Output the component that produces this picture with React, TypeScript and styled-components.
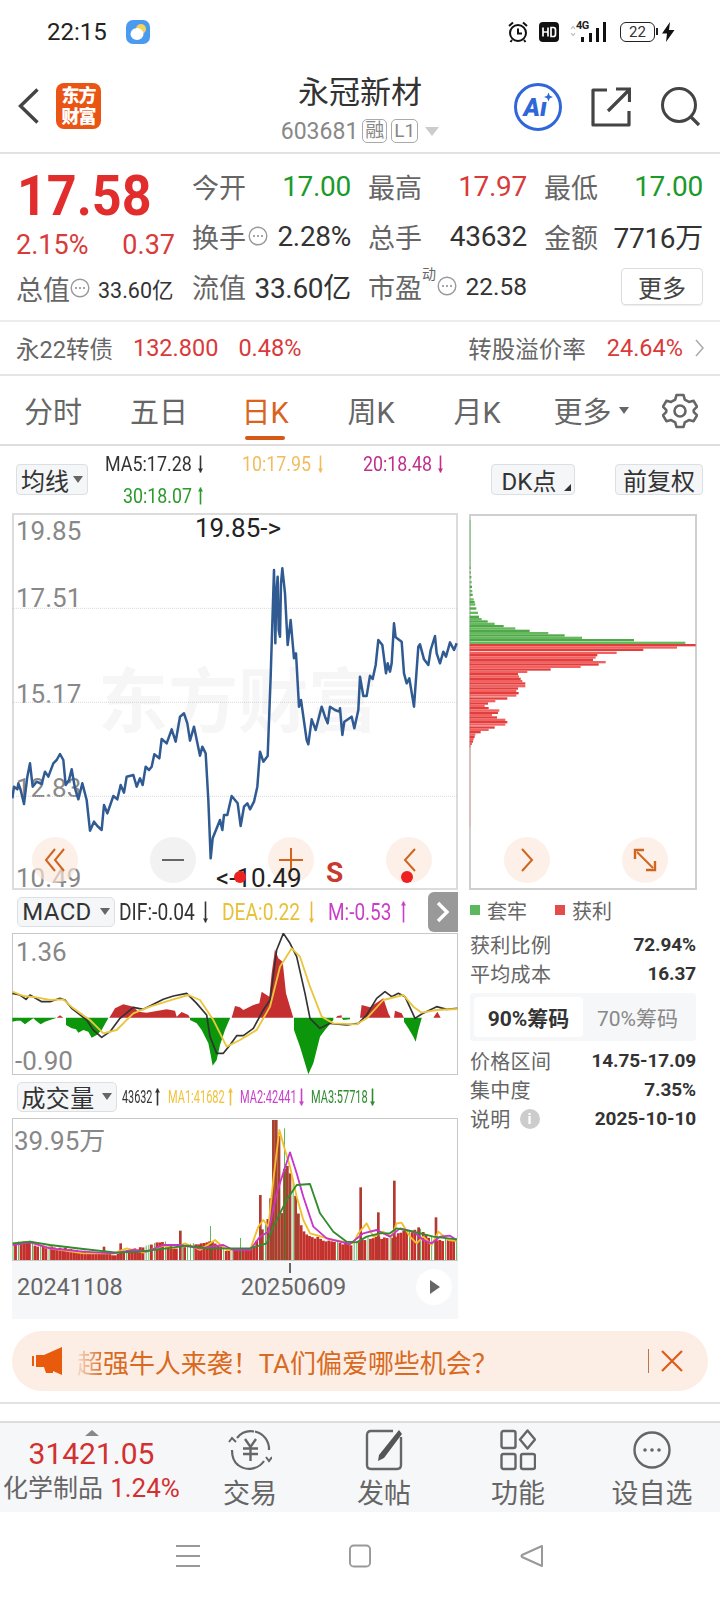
import React from "react";
import styled, { createGlobalStyle } from "styled-components";

const Global = createGlobalStyle`
  html, body { margin: 0; padding: 0; background: #fff; }
  body { font-family: Roboto, "Noto Sans CJK SC", sans-serif; overflow: hidden; }
  * { box-sizing: border-box; }
`;

const Page = styled.div`
  width: 720px; height: 1600px; background: #fff; display: flex; flex-direction: column; overflow: hidden;
`;

/* ---------- status bar ---------- */
const StatusBar = styled.div`
  height: 62px; display: flex; align-items: center; padding: 2px 45px 0 47px;
`;
const Clock = styled.span`font-size: 24px; color: #222; width: 79px;`;
const StatusRight = styled.div`margin-left: auto; display: flex; align-items: center; gap: 10px;`;
const FourG = styled.span`
  position: relative; width: 38px; height: 20px; display: block;
  font-size: 11px; font-weight: 700; color: #222;
`;
const FourGText = styled.span`position: absolute; left: 7px; top: -3px; letter-spacing: -0.5px;`;
const Battery = styled.span`
  width: 35px; height: 20px; border: 1.5px solid #222; border-radius: 6px; font-size: 15px; color: #333;
  display: flex; align-items: center; justify-content: center; margin: 0 -4px 0 3px; position: relative;
  &::after { content: ""; position: absolute; right: -4px; top: 5px; width: 2px; height: 7px; background: #222; }
`;

/* ---------- header ---------- */
const Header = styled.div`
  height: 92px; display: grid; grid-template-columns: 1fr auto 1fr; border-bottom: 2px solid #e2e2e2;
`;
const HeaderLeft = styled.div`display: flex; align-items: center; gap: 17px; padding: 0 0 2px 18px; `;
const HeaderRight = styled.div`display: flex; align-items: center; justify-content: flex-end; gap: 29px; padding: 0 19px 0 0;`;
const Logo = styled.div`
  width: 45px; height: 46px; border-radius: 8px; background: #ea5514; color: #fff;
  font-weight: 900; font-size: 18px; line-height: 21px;
  display: flex; flex-direction: column; align-items: center; justify-content: center; text-align: center; letter-spacing: -1px;
`;
const TitleBox = styled.div`
  display: flex; flex-direction: column; align-items: center; padding-top: 13px;
`;
const Title = styled.div`font-size: 31px; line-height: 36px; color: #333;`;
const Sub = styled.div`display: flex; align-items: center; height: 40px; color: #888; font-size: 23px; gap: 4px;`;
const SubBadge = styled.span`
  border: 1px solid #aaa; border-radius: 5px; height: 24px; font-size: 19px; line-height: 22px; padding: 0 2px; color: #888;
  display: flex; align-items: center;
`;
const SubTriangle = styled.span`
  width: 0; height: 0; border-left: 7px solid transparent; border-right: 7px solid transparent; border-top: 9px solid #ccc; margin-left: 3px;
`;

/* ---------- quote ---------- */
const Quote = styled.div`
  height: 168px; padding: 7px 0 0 16px; display: flex; border-bottom: 2px solid #ececec;
`;
const QuoteLeft = styled.div`width: 176px; display: flex; flex-direction: column;`;
const BigPrice = styled.div`
  height: 66px; width: 160px; font-size: 56px; line-height: 70px; font-weight: 700; color: #e22d2d;
  transform: scaleX(0.93); transform-origin: left center; padding-left: 1px;
`;
const ChangeRow = styled.div`
  height: 36px; width: 159px; display: flex; justify-content: space-between; align-items: center;
  font-size: 27px; color: #d93a3a;
`;
const TotalRow = styled.div`
  height: 50px; display: flex; align-items: center; color: #666; font-size: 27px;
`;
const SmallValue = styled.span`font-size: 21.5px; color: #333; margin-left: 8px;`;
const QuoteGrid = styled.div`
  display: grid; grid-template-columns: repeat(3, 159px); column-gap: 17px; grid-auto-rows: 50px;
`;
const Cell = styled.div`display: flex; align-items: center; justify-content: space-between; font-size: 27px; color: #666;`;
const CellLeft = styled.span`display: inline-flex; align-items: center; gap: 2px; position: relative;`;
const Val = styled.span<{ $c?: string; $s?: number }>`
  color: ${(p) => p.$c || "#333"}; font-size: ${(p) => p.$s || 28}px; letter-spacing: ${(p) => (p.$s ? "0" : "-0.3px")};
`;
const Sup = styled.span`position: absolute; left: 54px; top: -4px; font-size: 14px; color: #666;`;
const MoreBtn = styled.div`
  width: 82px; height: 37px; border: 1px solid #ddd; border-radius: 4px; font-size: 24px; color: #444;
  display: flex; align-items: center; justify-content: center; box-shadow: 0 1px 1px #eee;
`;

/* ---------- bond ---------- */
const Bond = styled.div`
  height: 54px; display: flex; align-items: center; padding: 0 16px 0 16px; font-size: 23.5px; color: #666; border-bottom: 2px solid #e5e5e5;
`;
const BondNum = styled.span<{ $ml: number }>`color: #d93a3a; margin-left: ${(p) => p.$ml}px;`;
const BondRight = styled.span`margin-left: auto; display: flex; align-items: center;`;
const BondChevron = styled.span`display: inline-flex; margin-left: 12px;`;

/* ---------- tabs ---------- */
const Tabs = styled.div`height: 70px; display: flex; border-bottom: 2px solid #dedede; position: relative;`;
const Tab = styled.div<{ $on?: boolean; $w?: number }>`
  width: ${(p) => p.$w || 106}px; height: 70px; display: flex; align-items: center; justify-content: center; padding-bottom: 2px;
  font-size: 29px; color: ${(p) => (p.$on ? "#d9641f" : "#666")}; position: relative; gap: 7px;
  ${(p) =>
    p.$on
      ? `&::after { content: ""; position: absolute; left: 33px; bottom: 6px; width: 40px; height: 4px; border-radius: 2px; background: #d65a17; }`
      : ""}
`;
const TabCaret = styled.span`
  width: 0; height: 0; border-left: 5px solid transparent; border-right: 5px solid transparent; border-top: 7px solid #666;
`;
const GearBox = styled.div`margin-left: 10px; display: flex; align-items: center; padding-top: 1px;`;

/* ---------- MA row ---------- */
const MaRow = styled.div`height: 67px; display: flex; padding: 0 16px;`;
const ToolBtn = styled.div<{ $w: number; $ml?: number; $pr?: number }>`
  width: ${(p) => p.$w}px; height: 31px; margin: 18px 0 0 ${(p) => p.$ml || 0}px; background: #f5f6f8; border: 1px solid #dcdfe4; border-radius: 4px;
  padding-right: ${(p) => p.$pr || 0}px;
  display: flex; align-items: center; justify-content: center; gap: 4px; font-size: 24px; color: #333; position: relative; flex: none;
`;
const BtnCaret = styled.span`
  width: 0; height: 0; border-left: 5px solid transparent; border-right: 5px solid transparent; border-top: 7px solid #666;
`;
const CornerMark = styled.span`
  position: absolute; right: 3px; bottom: 3px; width: 0; height: 0; border-left: 7px solid transparent; border-bottom: 7px solid #333;
`;
const MaCol = styled.div<{ $w: number; $ml: number }>`
  width: ${(p) => p.$w}px; margin-left: ${(p) => p.$ml}px; display: flex; flex-direction: column; align-items: flex-end; flex: none; font-size: 20px; padding-top: 2px;
`;
const MaLine = styled.div`height: 32px; display: flex; align-items: center; gap: 6px;`;
const Cond = styled.span<{ $w: number; $sx: number; $c: string; $s?: number }>`
  display: inline-block; width: ${(p) => p.$w}px; white-space: nowrap; color: ${(p) => p.$c};
  font-size: ${(p) => p.$s || 20}px; transform: scaleX(${(p) => p.$sx}); transform-origin: left center; flex: none;
`;

/* ---------- content ---------- */
const Content = styled.div`display: flex; padding-left: 12px; height: 806px;`;
const LeftCol = styled.div`width: 446px; display: flex; flex-direction: column; flex: none;`;
const RightCol = styled.div`width: 228px; margin-left: 11px; display: flex; flex-direction: column; flex: none; padding-top: 1px;`;
const ChartBox = styled.div<{ $h: number; $bw: number; $bc: string }>`
  position: relative; width: 100%; height: ${(p) => p.$h}px; flex: none;
  outline: ${(p) => p.$bw}px solid ${(p) => p.$bc}; outline-offset: -${(p) => p.$bw}px;
`;
const Layer = styled.svg`position: absolute; left: 0; top: 0; width: 100%; height: 100%; display: block;`;
const AxisLabel = styled.span<{ $x: number; $y: number; $c?: string; $s?: number }>`
  position: absolute; left: ${(p) => p.$x}px; top: ${(p) => p.$y}px; transform: translateY(-50%); white-space: nowrap;
  font-size: ${(p) => p.$s || 26}px; color: ${(p) => p.$c || "#888"}; line-height: 1;
`;
const Watermark = styled.span`
  position: absolute; left: 86px; top: 150px; font-size: 70px; font-weight: 700; color: #f6f6f6; letter-spacing: 0; white-space: nowrap; line-height: 80px;
`;
const SBadge = styled.span`
  position: absolute; left: 314px; top: 345px; font-size: 28px; font-weight: 700; color: #c93a2e; line-height: 30px;
`;
const RedDot = styled.span<{ $x: number }>`
  position: absolute; left: ${(p) => p.$x}px; top: 358px; width: 12px; height: 12px; border-radius: 50%; background: #ee2020;
`;
const RoundBtn = styled.div<{ $x: number; $y: number; $gray?: boolean }>`
  position: absolute; left: ${(p) => p.$x}px; top: ${(p) => p.$y}px; width: 46px; height: 46px; border-radius: 50%;
  background: ${(p) => (p.$gray ? "rgba(238,238,238,.75)" : "rgba(252,232,219,.65)")};
  display: flex; align-items: center; justify-content: center;
`;
const IndicatorRow = styled.div`
  height: 43px; display: flex; align-items: center; padding-left: 5px; position: relative; flex: none;
`;
const IndBtn = styled.div<{ $w: number; $s?: number }>`
  width: ${(p) => p.$w}px; height: 30px; background: #f5f6f8; border: 1px solid #dcdfe4; border-radius: 5px; flex: none;
  display: flex; align-items: center; justify-content: center; gap: 8px; font-size: ${(p) => p.$s || 24}px; color: #333; letter-spacing: 0.3px;
`;
const MoreTab = styled.div`
  position: absolute; right: 0; top: 2px; width: 30px; height: 40px; background: #999; border-radius: 6px 0 0 6px;
  display: flex; align-items: center; justify-content: center;
`;
const ArrowWrap = styled.span<{ $ml: number; $mr: number }>`
  display: inline-flex; margin: 0 ${(p) => p.$mr}px 0 ${(p) => p.$ml}px; flex: none;
`;
const DateStrip = styled.div`
  height: 58px; background: #f6f7f9; position: relative; display: flex; align-items: center; padding: 0 0 6px 5px; font-size: 23.5px; color: #666; flex: none;
`;
const DateText = styled.span<{ $ml?: number }>`margin-left: ${(p) => p.$ml || 0}px;`;
const Tick = styled.span`position: absolute; left: 277px; top: 2px; width: 2px; height: 10px; background: #666;`;
const PlayBtn = styled.div`
  position: absolute; right: 6px; top: 8px; width: 36px; height: 36px; border-radius: 50%; background: #fff;
  display: flex; align-items: center; justify-content: center; padding-left: 2px;
`;
const PlayTri = styled.span`
  width: 0; height: 0; border-top: 7.5px solid transparent; border-bottom: 7.5px solid transparent; border-left: 10px solid #666;
`;

/* ---------- right info ---------- */
const Legend = styled.div`height: 40px; display: flex; align-items: center; font-size: 20px; color: #666; padding-left: 1px; flex: none; `;
const Swatch = styled.span<{ $c: string; $ml?: number }>`
  width: 10px; height: 10px; background: ${(p) => p.$c}; margin: 0 7px 0 ${(p) => p.$ml || 0}px; flex: none;
`;
const InfoRow = styled.div`
  height: 29px; display: flex; align-items: center; justify-content: space-between; font-size: 20px; color: #666; flex: none; padding: 0 1px;
`;
const InfoKey = styled.span`display: inline-flex; align-items: center; gap: 9px; letter-spacing: 0.3px;`;
const InfoVal = styled.span`font-weight: 700; color: #333; font-size: 19px; letter-spacing: -0.1px;`;
const InfoDot = styled.span`
  width: 20px; height: 20px; border-radius: 50%; background: #ccc; color: #fff; font-size: 15px; font-weight: 700; display: flex; align-items: center; justify-content: center;
`;
const Seg = styled.div`
  height: 48px; margin: 5px 1px; border-radius: 4px; background: #f6f7f9; padding: 4px; display: grid; grid-template-columns: 109px 1fr; flex: none;
`;
const SegItem = styled.div<{ $on?: boolean }>`
  display: flex; align-items: center; justify-content: center; border-radius: 4px; font-size: 21px;
  background: ${(p) => (p.$on ? "#fff" : "transparent")}; color: ${(p) => (p.$on ? "#333" : "#888")}; font-weight: ${(p) => (p.$on ? 700 : 400)};
`;

/* ---------- banner & nav ---------- */
const Banner = styled.div`
  height: 60px; margin: 12px 12px 11px; border-radius: 30px; background: #fdeee5; display: flex; align-items: center; padding: 0 25px 0 20px; font-size: 26px; color: #d86a22; flex: none;
`;
const BannerText = styled.span`margin-left: 14px; white-space: nowrap; letter-spacing: -0.05px;`;
const Faded = styled.span`
  background: linear-gradient(90deg, #f8dcc9, #d86a22); -webkit-background-clip: text; background-clip: text; color: transparent;
`;
const BannerClose = styled.span`margin-left: auto; display: flex; align-items: center; gap: 12px;`;
const BannerSep = styled.span`width: 1.5px; height: 24px; background: #b9764b;`;
const Rule = styled.div`height: 2px; background: #e2e2e2; flex: none; margin-bottom: 17px;`;
const BottomNav = styled.div`
  height: 91px; background: #f6f7f9; border-top: 2px solid #dcdcdc; display: flex; flex: none;
`;
const Index = styled.div`
  width: 183px; display: flex; flex-direction: column; align-items: center; position: relative; padding-top: 7px; flex: none;
`;
const IndexCaret = styled.span`
  width: 0; height: 0; border-left: 7px solid transparent; border-right: 7px solid transparent; border-bottom: 6px solid #888;
`;
const IndexNum = styled.div`font-size: 30px; line-height: 34px; color: #d33030; margin-top: 1px;`;
const IndexSub = styled.div`font-size: 25px; line-height: 30px; color: #666; white-space: nowrap; margin-top: 2px;`;
const IndexPct = styled.span`color: #d33030; margin-left: 7px; font-size: 26px;`;
const NavItem = styled.div`
  width: 134px; display: flex; flex-direction: column; align-items: center; padding-top: 4px; flex: none;
`;
const NavIcon = styled.div`height: 46px; display: flex; align-items: center; justify-content: center;`;
const NavLabel = styled.div`font-size: 27px; line-height: 34px; color: #666; margin-top: 4px;`;
const SystemBar = styled.div`
  flex: 1; display: grid; grid-template-columns: 176px 24px 149px 22px 149px 24px; align-items: center;
`;
const SysItem = styled.div<{ $col: number }>`grid-column: ${(p) => p.$col}; display: flex; justify-content: center;`;

/* ---------- chart data (coordinates of a 3x drawing) ---------- */
const PRICE =
  "37,865 42,830 52,838 55,820 62,840 72,882 82,800 90,760 98,830 110,815 125,822 135,785 145,800 160,760 170,750 180,732 190,750 197,825 207,810 215,778 225,835 235,868 247,820 260,870 270,962 282,935 292,948 305,960 312,885 322,910 340,858 352,868 362,825 372,848 380,800 400,795 410,830 420,805 428,825 437,770 447,780 455,770 463,733 478,745 485,687 500,700 515,658 527,695 540,620 552,610 562,640 570,692 582,650 600,737 607,710 617,730 625,870 632,1045 638,985 660,930 667,960 672,915 682,915 695,858 713,880 722,948 732,890 742,880 750,898 762,875 772,830 780,725 790,755 803,738 812,500 822,180 826,400 829,250 833,200 836,360 840,380 843,220 847,175 855,250 863,405 872,330 882,445 888,430 897,590 903,570 920,690 925,703 935,628 947,660 965,590 975,620 983,640 990,590 1005,600 1018,605 1020,595 1027,675 1033,635 1055,620 1063,655 1075,600 1080,500 1090,558 1100,558 1110,497 1118,507 1127,465 1135,390 1147,405 1158,490 1163,460 1170,485 1175,460 1182,340 1187,382 1205,395 1212,490 1220,520 1228,505 1242,590 1255,410 1260,403 1272,448 1285,465 1292,420 1305,378 1310,430 1320,460 1330,425 1338,440 1350,397 1362,420 1370,400";

const GREEN_BARS: [number, number][] = [
  [200, 33], [214, 34], [228, 35], [243, 36], [257, 37], [270, 38], [281, 39], [295, 42], [303, 45], [310, 47], [322, 50], [335, 55], [347, 58],
  [354, 66], [361, 84], [368, 105], [375, 132], [382, 167], [389, 210], [396, 266], [403, 315], [410, 367], [417, 523], [425, 677],
];
const RED_BARS: [number, number][] = [
  [432, 708], [439, 652], [446, 551], [455, 471], [462, 413], [469, 408], [476, 400], [483, 438], [490, 417], [497, 363], [505, 273], [512, 203],
  [519, 175], [526, 178], [533, 183], [540, 188], [547, 197], [555, 197], [562, 175], [569, 170], [576, 177], [583, 170], [592, 143], [600, 107],
  [607, 85], [614, 75], [621, 87], [628, 119], [635, 115], [642, 97], [649, 112], [656, 137], [663, 143], [670, 137], [679, 105], [686, 87],
  [693, 63], [700, 47], [707, 45], [714, 42], [721, 40], [728, 37], [735, 32],
];

const MACD_GREEN = [
  "37,383 37,395 50,392 62,392 75,403 85,395 100,385 108,392 122,403 135,395 150,390 168,384 168,383",
  "198,383 198,405 215,415 228,418 235,428 250,420 265,425 275,443 290,435 305,420 325,384 325,383",
  "570,383 570,390 590,400 605,420 625,460 631,490 638,527 650,510 660,465 675,420 690,385 690,383",
  "882,383 882,420 900,470 925,553 940,520 960,440 975,420 1000,390 1000,383",
  "1212,383 1212,395 1225,415 1240,440 1247,455 1255,420 1265,385 1265,383",
  "1025,383 1030,390 1050,388 1050,383",
];
const MACD_RED = [
  "170,383 180,376 190,383",
  "328,383 345,355 370,343 400,350 415,365 440,368 500,358 525,362 530,380 545,366 565,375 570,383",
  "695,383 705,348 720,352 730,360 760,345 778,340 785,305 808,320 815,250 825,178 835,205 848,215 858,310 870,350 880,383",
  "1080,383 1085,345 1110,352 1150,325 1165,370 1172,383",
  "1182,383 1185,362 1205,370 1212,383",
  "1300,383 1312,365 1322,383",
  "1008,383 1012,378 1025,376 1025,383",
];
const MACD_DIF =
  "37,310 60,315 78,328 90,315 125,335 150,335 180,325 195,330 215,355 260,390 280,420 305,442 330,425 360,385 400,352 430,358 490,328 520,318 560,310 590,340 620,375 630,440 650,490 670,490 690,465 710,437 730,437 760,415 790,360 810,330 830,180 850,130 870,160 890,200 915,310 930,385 960,415 990,400 1040,405 1075,400 1100,375 1130,325 1155,305 1175,320 1195,310 1215,320 1245,385 1265,372 1310,350 1340,358 1372,355";
const MACD_DEA =
  "37,305 70,318 110,322 150,330 190,328 220,355 270,390 310,430 350,420 400,370 450,350 520,328 565,315 600,330 640,390 680,470 720,450 770,420 810,350 840,230 875,175 900,200 930,290 965,380 1000,400 1070,403 1100,385 1150,330 1210,315 1240,350 1265,368 1310,360 1372,357";

const VOL_ENV: [number, number][] = [
  [38, 492], [90, 482], [110, 500], [200, 505], [300, 518], [350, 522], [400, 508], [440, 500], [488, 485],
  [530, 503], [640, 482], [680, 512], [760, 506], [775, 470], [810, 405], [820, 120], [835, 120],
  [845, 400], [855, 240], [870, 280], [880, 300], [900, 430], [920, 465], [1000, 485], [1060, 492], [1100, 475], [1180, 470],
  [1210, 455], [1260, 450], [1300, 480], [1370, 478],
];
const VOL_SPIKES: [number, number][] = [
  [781, 345], [1082, 322], [1135, 397], [1183, 302], [1308, 412], [541, 452], [362, 490], [312, 500], [1256, 442],
];
const envAt = (x: number) => {
  for (let i = 1; i < VOL_ENV.length; i++) {
    const [x0, y0] = VOL_ENV[i - 1];
    const [x1, y1] = VOL_ENV[i];
    if (x <= x1) return y0 + ((y1 - y0) * (x - x0)) / (x1 - x0);
  }
  return 480;
};
const VOL_BARS = Array.from({ length: 161 }, (_, i) => {
  const x = 38 + i * 8.32;
  const h = Math.abs(Math.sin(i * 12.9898) * 43758.5453) % 1;
  const green = h < 0.17 && x < 1372;
  const top = Math.min(535, envAt(x) + (h - 0.5) * 10);
  return { x, top: x > 780 && x < 880 ? envAt(x) : top, green };
});
const VOL_YEL =
  "38,490 90,485 150,505 250,520 340,520 380,505 430,518 490,497 520,505 555,490 600,510 645,480 680,510 750,510 775,440 790,420 805,440 820,300 838,150 855,210 870,260 890,350 910,420 930,460 1000,480 1060,490 1075,460 1100,430 1120,470 1150,455 1175,470 1190,430 1205,428 1230,470 1250,490 1270,470 1295,495 1315,455 1345,480 1370,483";
const VOL_MAG =
  "38,495 90,487 150,505 250,515 340,520 400,510 440,515 490,495 540,495 600,505 670,495 700,510 750,510 780,470 805,455 830,340 870,217 890,280 910,350 940,440 980,475 1050,492 1090,460 1130,450 1170,470 1200,445 1240,455 1270,480 1295,490 1320,470 1350,467 1370,480";
const VOL_GRN =
  "38,490 90,485 150,495 250,507 350,518 420,515 500,505 560,497 620,505 680,505 750,505 800,490 820,440 860,360 890,315 930,312 960,400 1000,455 1040,485 1070,487 1100,470 1140,460 1170,460 1190,445 1240,455 1300,470 1370,478";

/* ---------- small drawings ---------- */
const Arrow: React.FC<{ c: string; up?: boolean; h?: number }> = ({ c, up, h = 18 }) => (
  <svg width="7" height={h} viewBox={`0 0 7 ${h}`}>
    <path d={`M3.5 0.5V${h - 0.5}`} stroke={c} strokeWidth="1.6" fill="none" />
    <path d={up ? "M1 4.5L3.5 0.5 6 4.5Z" : `M1 ${h - 4.5}L3.5 ${h - 0.5} 6 ${h - 4.5}Z`} fill={c} />
  </svg>
);
const Dots: React.FC = () => (
  <svg width="20" height="20" viewBox="0 0 20 20">
    <circle cx="10" cy="10" r="8.8" fill="none" stroke="#999" strokeWidth="1.4" />
    <circle cx="6" cy="10" r="1" fill="#888" /><circle cx="10" cy="10" r="1" fill="#888" /><circle cx="14" cy="10" r="1" fill="#888" />
  </svg>
);
const Svg: React.FC<{ w: number; h: number; children: React.ReactNode }> = ({ w, h, children }) => (
  <svg width={w} height={h} viewBox={`0 0 ${w} ${h}`} fill="none">{children}</svg>
);
const OR = "#d0651f";

export default function App() {
  return (
    <Page>
      <Global />
      <StatusBar>
        <Clock>22:15</Clock>
        <Svg w={24} h={24}>
          <rect width="24" height="24" rx="7" fill="#4a9bf0" />
          <circle cx="15" cy="9" r="5" fill="#f7d259" />
          <ellipse cx="11" cy="14" rx="6.5" ry="6" fill="#fff" />
        </Svg>
        <StatusRight>
          <Svg w={22} h={22}>
            <circle cx="11" cy="12" r="8" stroke="#111" strokeWidth="2" />
            <path d="M11 7.5V12.5H15M2 5L6 1.5M20 5L16 1.5M5 19L3.5 21M17 19L18.5 21" stroke="#111" strokeWidth="2" />
          </Svg>
          <Svg w={20} h={20}>
            <rect width="20" height="20" rx="4" fill="#111" />
            <path d="M4 5.5V14.5M9 5.5V14.5M4 10H9M12 5.5V14.5H14.5Q16.5 14.5 16.5 12V8Q16.5 5.5 14.5 5.5H12Z" stroke="#fff" strokeWidth="1.7" />
          </Svg>
          <FourG>
            <Svg w={38} h={20}>
              <path d="M2 7L4 4.5 6 7M2 11L4 13.5 6 11" stroke="#bbb" strokeWidth="1.2" />
              <rect x="12" y="15" width="3" height="5" fill="#111" />
              <rect x="20" y="11" width="3" height="9" fill="#111" />
              <rect x="27" y="6" width="3" height="14" fill="#111" />
              <rect x="34" y="0" width="3" height="20" fill="#111" />
            </Svg>
            <FourGText>4G</FourGText>
          </FourG>
          <Battery>22</Battery>
          <Svg w={14} h={20}>
            <path d="M9 0L1 11.5H6L5 20L13.5 8H8Z" fill="#111" />
          </Svg>
        </StatusRight>
      </StatusBar>

      <Header>
        <HeaderLeft>
          <Svg w={21} h={36}><path d="M19.5 1.5L2.5 18L19.5 34.5" stroke="#444" strokeWidth="3.4" /></Svg>
          <Logo>东方<br />财富</Logo>
        </HeaderLeft>
        <TitleBox>
          <Title>永冠新材</Title>
          <Sub>
            603681
            <SubBadge>融</SubBadge>
            <SubBadge>L1</SubBadge>
            <SubTriangle />
          </Sub>
        </TitleBox>
        <HeaderRight>
          <Svg w={48} h={48}>
            <circle cx="24" cy="24" r="22.5" stroke="#2f66d9" strokeWidth="3" />
            <text x="9.5" y="33" fontFamily="Roboto" fontWeight="900" fontStyle="italic" fontSize="25" fill="#2f66d9">Aı</text>
            <path d="M34.5 9.5L35.8 12.7 39 14 35.8 15.3 34.5 18.5 33.2 15.3 30 14 33.2 12.7Z" fill="#2f66d9" />
          </Svg>
          <Svg w={40} h={40}>
            <path d="M16 3H2V38H38V24" stroke="#444" strokeWidth="3.2" strokeLinejoin="round" />
            <path d="M17 24L38 3M25 2H38.5V15" stroke="#444" strokeWidth="3.2" />
          </Svg>
          <Svg w={41} h={40}>
            <circle cx="19" cy="18" r="16.5" stroke="#444" strokeWidth="3" />
            <path d="M31 30L39 38" stroke="#444" strokeWidth="3.2" />
          </Svg>
        </HeaderRight>
      </Header>

      <Quote>
        <QuoteLeft>
          <BigPrice>17.58</BigPrice>
          <ChangeRow><span>2.15%</span><span>0.37</span></ChangeRow>
          <TotalRow>总值<Dots /><SmallValue>33.60亿</SmallValue></TotalRow>
        </QuoteLeft>
        <QuoteGrid>
          <Cell><span>今开</span><Val $c="#1a9a2a">17.00</Val></Cell>
          <Cell><span>最高</span><Val $c="#d93a3a">17.97</Val></Cell>
          <Cell><span>最低</span><Val $c="#1a9a2a">17.00</Val></Cell>
          <Cell><CellLeft>换手<Dots /></CellLeft><Val>2.28%</Val></Cell>
          <Cell><span>总手</span><Val>43632</Val></Cell>
          <Cell><span>金额</span><Val>7716万</Val></Cell>
          <Cell><span>流值</span><Val>33.60亿</Val></Cell>
          <Cell>
            <CellLeft>市盈<Sup>动</Sup></CellLeft>
            <CellLeft><Dots /><Val $s={24.5}>&nbsp;22.58</Val></CellLeft>
          </Cell>
          <Cell><span /><MoreBtn>更多</MoreBtn></Cell>
        </QuoteGrid>
      </Quote>

      <Bond>
        永22转债
        <BondNum $ml={20}>132.800</BondNum>
        <BondNum $ml={20}>0.48%</BondNum>
        <BondRight>
          转股溢价率
          <BondNum $ml={21}>24.64%</BondNum>
          <BondChevron>
            <Svg w={9} h={18}><path d="M1 1L8 9 1 17" stroke="#aaa" strokeWidth="1.5" /></Svg>
          </BondChevron>
        </BondRight>
      </Bond>

      <Tabs>
        <Tab>分时</Tab>
        <Tab>五日</Tab>
        <Tab $on>日K</Tab>
        <Tab>周K</Tab>
        <Tab>月K</Tab>
        <Tab $w={122}>更多<TabCaret /></Tab>
        <GearBox>
          <Svg w={36} h={36}>
            <path d="M14.5 2H21.5L22.8 6.6 26.9 8.9 31.6 7.8 35 13.7 31.7 17.2V18.8 L35 22.3 31.6 28.2 26.9 27.1 22.8 29.4 21.5 34H14.5L13.2 29.4 9.1 27.1 4.4 28.2 1 22.3 4.3 18.8V17.2L1 13.7 4.4 7.8 9.1 8.9 13.2 6.6Z" stroke="#666" strokeWidth="2.6" strokeLinejoin="round" />
            <circle cx="18" cy="18" r="5.5" stroke="#666" strokeWidth="2.6" />
          </Svg>
        </GearBox>
      </Tabs>

      <MaRow>
        <ToolBtn $w={72}>均线<BtnCaret /></ToolBtn>
        <MaCol $w={116} $ml={0}>
          <MaLine><Cond $w={86} $sx={0.895} $c="#333">MA5:17.28</Cond><Arrow c="#333" /></MaLine>
          <MaLine><Cond $w={68} $sx={0.89} $c="#2b9a2b">30:18.07</Cond><Arrow c="#2b9a2b" up /></MaLine>
        </MaCol>
        <MaCol $w={81} $ml={39}>
          <MaLine><Cond $w={69} $sx={0.89} $c="#f2bc5e">10:17.95</Cond><Arrow c="#f2bc5e" /></MaLine>
        </MaCol>
        <MaCol $w={80} $ml={40}>
          <MaLine><Cond $w={68} $sx={0.89} $c="#c02f8c">20:18.48</Cond><Arrow c="#c02f8c" /></MaLine>
        </MaCol>
        <ToolBtn $w={84} $ml={47} $pr={8}>DK点<CornerMark /></ToolBtn>
        <ToolBtn $w={88} $ml={40}>前复权</ToolBtn>
      </MaRow>

      <Content>
        <LeftCol>
          <ChartBox $h={377} $bw={2} $bc="#dcdcdc">
            <Watermark>东方财富</Watermark>
            <AxisLabel $x={4} $y={18}>19.85</AxisLabel>
            <AxisLabel $x={4} $y={85}>17.51</AxisLabel>
            <AxisLabel $x={4} $y={181}>15.17</AxisLabel>
            <AxisLabel $x={4} $y={275}>12.83</AxisLabel>
            <AxisLabel $x={4} $y={365}>10.49</AxisLabel>
            <Layer viewBox="36 9 1338 1131" preserveAspectRatio="none">
              {[295, 577, 859].map((y) => (
                <line key={y} x1="36" x2="1374" y1={y} y2={y} stroke="#c4c4c4" strokeWidth="2" strokeDasharray="3 3" />
              ))}
              <polyline points={PRICE} fill="none" stroke="#2f5a92" strokeWidth="7.5" strokeLinejoin="round" />
            </Layer>
            <AxisLabel $x={183} $y={15} $c="#222">19.85-&gt;</AxisLabel>
            <RoundBtn $x={20} $y={324}>
              <Svg w={22} h={26}><path d="M11 2L2 13 11 24M20 2L11 13 20 24" stroke={OR} strokeWidth="2" /></Svg>
            </RoundBtn>
            <RoundBtn $x={138} $y={324} $gray>
              <Svg w={22} h={4}><path d="M0 2H22" stroke="#666" strokeWidth="2" /></Svg>
            </RoundBtn>
            <RoundBtn $x={256} $y={324}>
              <Svg w={24} h={24}><path d="M0 12H24M12 0V24" stroke={OR} strokeWidth="2" /></Svg>
            </RoundBtn>
            <RoundBtn $x={374} $y={324}>
              <Svg w={13} h={24}><path d="M12 1L2 12 12 23" stroke={OR} strokeWidth="2" /></Svg>
            </RoundBtn>
            <AxisLabel $x={204} $y={365} $c="#222">&lt;-10.49</AxisLabel>
            <RedDot $x={222} />
            <SBadge>S</SBadge>
            <RedDot $x={389} />
          </ChartBox>

          <IndicatorRow>
            <IndBtn $w={98}>MACD<BtnCaret /></IndBtn>
            <ArrowWrap $ml={4} $mr={0}><Cond $w={77} $sx={0.8} $c="#333" $s={24}>DIF:-0.04</Cond></ArrowWrap>
            <ArrowWrap $ml={6} $mr={0}><Arrow c="#333" h={22} /></ArrowWrap>
            <ArrowWrap $ml={13} $mr={0}><Cond $w={78} $sx={0.8} $c="#e8c13a" $s={24}>DEA:0.22</Cond></ArrowWrap>
            <ArrowWrap $ml={8} $mr={0}><Arrow c="#e8b93a" h={22} /></ArrowWrap>
            <ArrowWrap $ml={13} $mr={0}><Cond $w={64} $sx={0.79} $c="#c83fc8" $s={24}>M:-0.53</Cond></ArrowWrap>
            <ArrowWrap $ml={8} $mr={0}><Arrow c="#c83fc8" up h={22} /></ArrowWrap>
            <MoreTab>
              <Svg w={14} h={22}><path d="M2 2L11 11 2 20" stroke="#fff" strokeWidth="3.4" /></Svg>
            </MoreTab>
          </IndicatorRow>

          <ChartBox $h={142} $bw={1} $bc="#c8c8c8">
            <AxisLabel $x={4} $y={19} $s={26}>1.36</AxisLabel>
            <AxisLabel $x={3} $y={128} $s={26}>-0.90</AxisLabel>
            <Layer viewBox="36 129 1338 426" preserveAspectRatio="none">
              {MACD_GREEN.map((p) => <polygon key={p} points={p} fill="#0b960b" />)}
              {MACD_RED.map((p) => <polygon key={p} points={p} fill="#c62f2f" />)}
              <polyline points={MACD_DIF} fill="none" stroke="#333" strokeWidth="5" strokeLinejoin="round" />
              <polyline points={MACD_DEA} fill="none" stroke="#eac63f" strokeWidth="5.5" strokeLinejoin="round" />
            </Layer>
          </ChartBox>

          <IndicatorRow>
            <IndBtn $w={100}>成交量<BtnCaret /></IndBtn>
            <ArrowWrap $ml={5} $mr={0}><Cond $w={30} $sx={0.57} $c="#333" $s={19}>43632</Cond></ArrowWrap>
            <ArrowWrap $ml={2} $mr={0}><Arrow c="#333" up /></ArrowWrap>
            <ArrowWrap $ml={7} $mr={0}><Cond $w={56} $sx={0.58} $c="#f0c23c" $s={19}>MA1:41682</Cond></ArrowWrap>
            <ArrowWrap $ml={3} $mr={0}><Arrow c="#f0c23c" up /></ArrowWrap>
            <ArrowWrap $ml={6} $mr={0}><Cond $w={55} $sx={0.58} $c="#c83fc8" $s={19}>MA2:42441</Cond></ArrowWrap>
            <ArrowWrap $ml={3} $mr={0}><Arrow c="#c83fc8" /></ArrowWrap>
            <ArrowWrap $ml={6} $mr={0}><Cond $w={55} $sx={0.58} $c="#2f8c2f" $s={19}>MA3:57718</Cond></ArrowWrap>
            <ArrowWrap $ml={3} $mr={0}><Arrow c="#2f8c2f" /></ArrowWrap>
          </IndicatorRow>

          <ChartBox $h={143} $bw={1} $bc="#c8c8c8">
            <AxisLabel $x={2} $y={23} $s={26}>39.95万</AxisLabel>
            <Layer viewBox="36 114 1338 429" preserveAspectRatio="none">
              {VOL_BARS.map((b) =>
                b.green ? (
                  <g key={b.x}>
                    <rect x={b.x - 3} y={b.top} width="7" height={540 - b.top} fill="#fff" />
                    <rect x={b.x} y={b.top} width="2" height={540 - b.top} fill="#0b960b" />
                  </g>
                ) : (
                  <rect key={b.x} x={b.x - 4} y={b.top} width="8.4" height={540 - b.top} fill={b.x > 780 && b.x < 900 ? "#a8402e" : "#c4302c"} />
                )
              )}
              {VOL_SPIKES.map(([x, top]) => (
                <rect key={x} x={x - 4} y={top} width="8" height={540 - top} fill="#b23a30" />
              ))}
              <rect x="631" y="438" width="2" height="102" fill="#0b960b" />
              <rect x="721" y="474" width="2" height="66" fill="#0b960b" />
              <rect x="852" y="145" width="2" height="395" fill="#0b960b" />
              <polyline points={VOL_YEL} fill="none" stroke="#f2bf2a" strokeWidth="5.5" strokeLinejoin="round" />
              <polyline points={VOL_MAG} fill="none" stroke="#c935c9" strokeWidth="5.5" strokeLinejoin="round" />
              <polyline points={VOL_GRN} fill="none" stroke="#2f8c2f" strokeWidth="5.5" strokeLinejoin="round" />
            </Layer>
          </ChartBox>

          <DateStrip>
            <Tick />
            <DateText>20241108</DateText>
            <DateText $ml={118}>20250609</DateText>
            <PlayBtn><PlayTri /></PlayBtn>
          </DateStrip>
        </LeftCol>

        <RightCol>
          <ChartBox $h={376} $bw={2} $bc="#cfcfcf">
            <Layer viewBox="28 42 684 1128" preserveAspectRatio="none">
              <rect x="30" y="60" width="3" height="140" fill="#7ec27e" />
              <rect x="30" y="740" width="2" height="240" fill="#e0a0a0" />
              {GREEN_BARS.map(([y, x], i) => (
                <rect key={y} x="30" y={y} width={x - 30} height="7" fill={i % 2 ? "#66b95c" : "#4fa84a"} />
              ))}
              {RED_BARS.map(([y, x], i) => (
                <rect key={y} x="30" y={y} width={x - 30} height="7" fill={i % 2 ? "#f26060" : "#e23e3e"} />
              ))}
            </Layer>
            <RoundBtn $x={35} $y={323}>
              <Svg w={13} h={24}><path d="M1 1L11 12 1 23" stroke={OR} strokeWidth="2" /></Svg>
            </RoundBtn>
            <RoundBtn $x={153} $y={323}>
              <Svg w={24} h={24}>
                <path d="M4 4L20 20" stroke={OR} strokeWidth="2" />
                <path d="M2 11V2H11M22 13V22H13" stroke={OR} strokeWidth="2.4" />
              </Svg>
            </RoundBtn>
          </ChartBox>
          <Legend>
            <Swatch $c="#5cb85c" />套牢
            <Swatch $c="#e44b4b" $ml={28} />获利
          </Legend>
          <InfoRow><InfoKey>获利比例</InfoKey><InfoVal>72.94%</InfoVal></InfoRow>
          <InfoRow><InfoKey>平均成本</InfoKey><InfoVal>16.37</InfoVal></InfoRow>
          <Seg>
            <SegItem $on>90%筹码</SegItem>
            <SegItem>70%筹码</SegItem>
          </Seg>
          <InfoRow><InfoKey>价格区间</InfoKey><InfoVal>14.75-17.09</InfoVal></InfoRow>
          <InfoRow><InfoKey>集中度</InfoKey><InfoVal>7.35%</InfoVal></InfoRow>
          <InfoRow><InfoKey>说明<InfoDot>i</InfoDot></InfoKey><InfoVal>2025-10-10</InfoVal></InfoRow>
        </RightCol>
      </Content>

      <Banner>
        <Svg w={31} h={28}>
          <path d="M0 9H2V19H0ZM4 8H12L30 0V28L21 24V26H14L12 20H4Z" fill="#e85a0c" />
        </Svg>
        <BannerText><Faded>超</Faded>强牛人来袭！TA们偏爱哪些机会？</BannerText>
        <BannerClose>
          <BannerSep />
          <Svg w={22} h={22}><path d="M1 1L21 21M21 1L1 21" stroke="#e05a1a" strokeWidth="2.2" /></Svg>
        </BannerClose>
      </Banner>
      <Rule />

      <BottomNav>
        <Index>
          <IndexCaret />
          <IndexNum>31421.05</IndexNum>
          <IndexSub>化学制品<IndexPct>1.24%</IndexPct></IndexSub>
        </Index>
        <NavItem>
          <NavIcon>
            <Svg w={44} h={40}>
              <path d="M9 8A18 18 0 0 1 26 1.5M36 31A18 18 0 0 1 10 35C6 32 4 26 4 20" stroke="#666" strokeWidth="2.2" />
              <path d="M27 1.5A18 18 0 0 1 41 20" stroke="#666" strokeWidth="2.2" />
              <path d="M1 12L4 8 8 12M38 27L41 31 44 27" stroke="#666" strokeWidth="2" />
              <path d="M17 9L22.5 17 28 9M22.5 17V31M15 18.5H30M15 24H30" stroke="#666" strokeWidth="2.4" />
            </Svg>
          </NavIcon>
          <NavLabel>交易</NavLabel>
        </NavItem>
        <NavItem>
          <NavIcon>
            <Svg w={38} h={42}>
              <path d="M28 2H6Q2 2 2 6V36Q2 40 6 40H32Q36 40 36 36V8" stroke="#666" strokeWidth="2.4" />
              <path d="M34 1L14 26 13 32 19 29 37 5Z" fill="#555" />
            </Svg>
          </NavIcon>
          <NavLabel>发帖</NavLabel>
        </NavItem>
        <NavItem>
          <NavIcon>
            <Svg w={36} h={42}>
              <rect x="1.5" y="2" width="14" height="17" rx="2" stroke="#666" strokeWidth="2.4" />
              <rect x="1.5" y="25" width="14" height="15" rx="2" stroke="#666" strokeWidth="2.4" />
              <rect x="21" y="25" width="14" height="15" rx="2" stroke="#666" strokeWidth="2.4" />
              <path d="M27.5 1.5L35 10.5 27.5 19.5 20 10.5Z" stroke="#666" strokeWidth="2.4" strokeLinejoin="round" />
            </Svg>
          </NavIcon>
          <NavLabel>功能</NavLabel>
        </NavItem>
        <NavItem>
          <NavIcon>
            <Svg w={38} h={38}>
              <circle cx="19" cy="19" r="17.5" stroke="#666" strokeWidth="2.4" />
              <circle cx="12" cy="19" r="1.8" fill="#666" /><circle cx="19" cy="19" r="1.8" fill="#666" /><circle cx="26" cy="19" r="1.8" fill="#666" />
            </Svg>
          </NavIcon>
          <NavLabel>设自选</NavLabel>
        </NavItem>
      </BottomNav>

      <SystemBar>
        <SysItem $col={2}>
          <Svg w={24} h={24}><path d="M0 2H24M0 12H24M0 22H24" stroke="#999" strokeWidth="2.2" /></Svg>
        </SysItem>
        <SysItem $col={4}>
          <Svg w={23} h={24}><rect x="1" y="1" width="21" height="22" rx="4" stroke="#999" strokeWidth="2" /></Svg>
        </SysItem>
        <SysItem $col={6}>
          <Svg w={24} h={24}><path d="M22 2V22L2 13Q1 12 2 11Z" stroke="#999" strokeWidth="2" strokeLinejoin="round" /></Svg>
        </SysItem>
      </SystemBar>
    </Page>
  );
}
